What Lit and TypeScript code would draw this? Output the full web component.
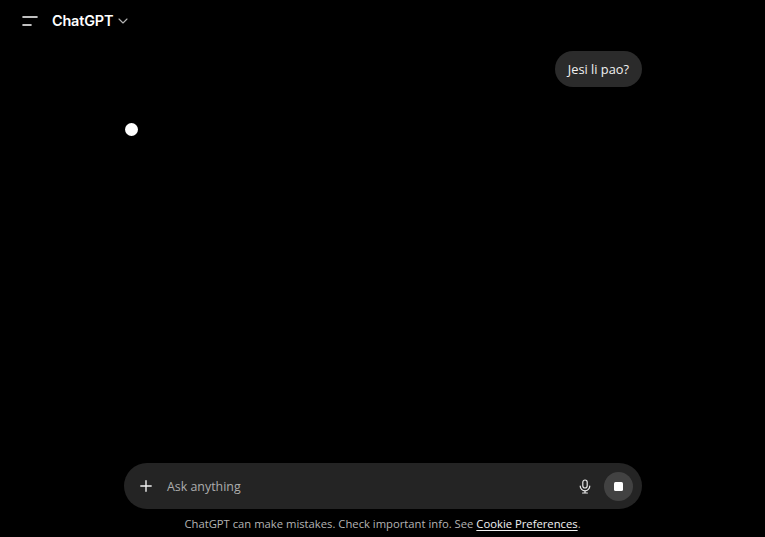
import { LitElement, html, css } from "lit";
import { customElement } from "lit/decorators.js";

@customElement("app-root")
export class AppRoot extends LitElement {
  static styles = css`
    :host {
      display: flex;
      flex-direction: column;
      height: 100vh;
      background: #000;
      color: #fff;
      font-family: "Open Sans", "Noto Sans", sans-serif;
      overflow: hidden;
    }
    .header {
      height: 41px;
      display: flex;
      align-items: center;
      padding-left: 22px;
      flex: none;
    }
    .menu { width: 16px; height: 12px; display: block; margin-right: 14px; }
    .title {
      font-family: Inter, "Liberation Sans", sans-serif;
      font-size: 14.4px;
      font-weight: 600;
      letter-spacing: -0.15px;
      line-height: 20px;
    }
    .chev { width: 10px; height: 6px; margin-left: 4.5px; margin-top: 1px; display: block; }
    .main {
      flex: 1;
      width: 518px;
      margin-left: 124px;
      min-height: 0;
      display: flex;
      flex-direction: column;
      padding-top: 10px;
      box-sizing: border-box;
    }
    .bubble {
      align-self: flex-end;
      height: 36px;
      padding: 0 13px;
      border-radius: 18px;
      background: #2b2b2b;
      font-size: 12.8px;
      line-height: 37px;
      color: #f1f1f1;
    }
    .dot {
      width: 13px;
      height: 13px;
      border-radius: 50%;
      background: #fff;
      margin: 36px 0 0 1px;
    }
    .composer {
      flex: none;
      width: 518px;
      height: 46px;
      margin-left: 124px;
      box-sizing: border-box;
      border-radius: 23px;
      background: #242424;
      display: flex;
      align-items: center;
      padding: 0 9px 0 16px;
    }
    .plus { width: 12px; height: 12px; display: block; margin-right: 15px; flex: none; }
    .placeholder { flex: 1; font-size: 12.4px; color: #adadad; }
    .mic { width: 12px; height: 15px; display: block; margin-right: 13px; }
    .stop {
      width: 29px;
      height: 29px;
      border-radius: 50%;
      background: #424242;
      display: flex;
      align-items: center;
      justify-content: center;
    }
    .stop i { width: 9px; height: 9px; border-radius: 1.5px; background: #fff; display: block; }
    .footer {
      flex: none;
      height: 28px;
      display: flex;
      align-items: center;
      justify-content: center;
      font-size: 11.25px;
      color: #b4b4b4;
      white-space: pre;
    }
    .footer a { color: #f3f3f3; text-decoration: underline; text-underline-offset: 2px; }
  `;

  render() {
    return html`
      <div class="header">
        <svg class="menu" viewBox="0 0 16 12" fill="none" stroke="#fff" stroke-width="1.6" stroke-linecap="round">
          <path d="M1 2h14" /><path d="M1 10h8" />
        </svg>
        <span class="title">ChatGPT</span>
        <svg class="chev" viewBox="0 0 10 6" fill="none" stroke="#b4b4b4" stroke-width="1.1" stroke-linecap="round" stroke-linejoin="round">
          <path d="M1 1l4 4 4-4" />
        </svg>
      </div>
      <div class="main">
        <div class="bubble">Jesi li pao?</div>
        <div class="dot"></div>
      </div>
      <div class="composer">
        <svg class="plus" viewBox="0 0 12 12" fill="none" stroke="#f0f0f0" stroke-width="1.4" stroke-linecap="round">
          <path d="M6 .8v10.4M.8 6h10.4" />
        </svg>
        <span class="placeholder">Ask anything</span>
        <svg class="mic" viewBox="0 0 12 15" fill="none" stroke="#e8e8e8" stroke-width="1.2" stroke-linecap="round">
          <rect x="3.8" y="1" width="4.4" height="8" rx="2.2" />
          <path d="M1.2 7a4.8 4.8 0 0 0 9.6 0" />
          <path d="M6 11.8v2M3.6 14h4.8" />
        </svg>
        <div class="stop"><i></i></div>
      </div>
      <div class="footer">ChatGPT can make mistakes. Check important info. See <a>Cookie Preferences</a>.</div>
    `;
  }
}
